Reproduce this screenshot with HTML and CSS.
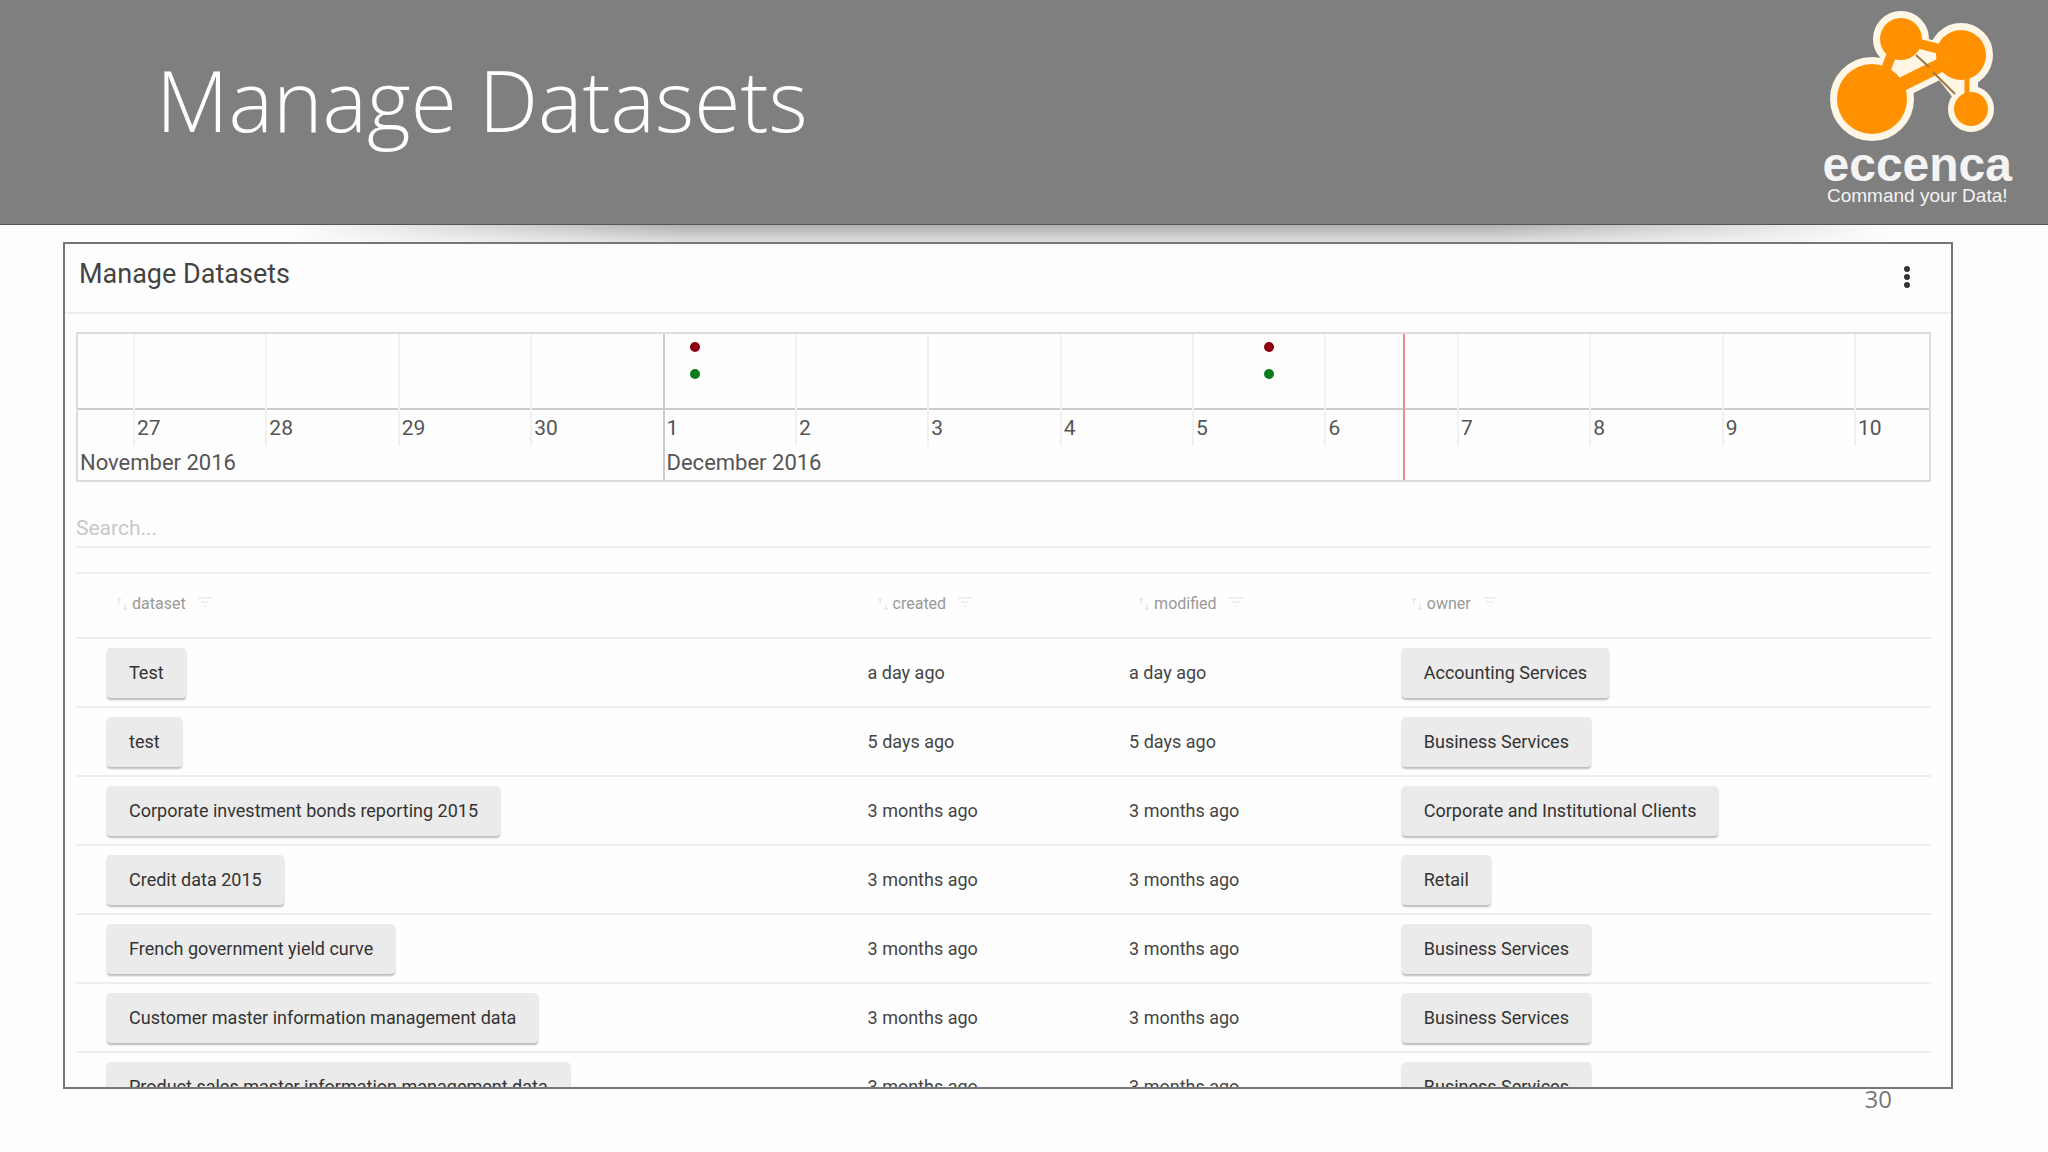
FILE: index.html
```html
<!DOCTYPE html>
<html lang="en">
<head>
  <meta charset="UTF-8" />
  <meta name="viewport" content="width=device-width, initial-scale=1.0" />
  <title>Manage Datasets</title>
  <link rel="stylesheet" href="styles.css">
</head>
<body>
  <header class="slide-header">
    <h1>Manage Datasets</h1>
    <div class="brand">
      <svg class="brand-logo" viewBox="0 0 172 132" aria-hidden="true">
        <g fill="#fff6e6" stroke="#fff6e6" stroke-width="14">
          <circle cx="47" cy="90" r="35" />
          <circle cx="76" cy="30" r="21" />
          <circle cx="136" cy="46" r="25" />
          <circle cx="146" cy="100" r="16" />
          <path d="M47 90L136 46L76 30ZM98 40L146 100V50Z" />
          <path d="M47 90L136 46" stroke-width="26" />
        </g>
        <g fill="#ff9100">
          <circle cx="47" cy="90" r="35" />
          <circle cx="76" cy="30" r="21" />
          <circle cx="136" cy="46" r="25" />
          <circle cx="146" cy="100" r="17" />
        </g>
        <g stroke="#ff9100" fill="none">
          <path d="M47 90L136 46" stroke-width="14" />
          <path d="M76 30L122 42" stroke-width="10" />
          <path d="M54 78L68 42" stroke-width="10" />
          <path d="M142 66V92" stroke-width="5" />
        </g>
        <path d="M91 46L104 58M108 63L130 85" stroke="#9b7a45" stroke-width="2" />
      </svg>
      <div class="brand-name">eccenca</div>
      <div class="brand-claim">Command your Data!</div>
    </div>
  </header>
  <div class="header-shadow"></div>

  <main class="panel">
    <div class="panel-title">
      <h2>Manage Datasets</h2>
      <button class="menu-btn" type="button" aria-label="Menu">
        <svg viewBox="0 0 8 24" width="8" height="24">
          <circle cx="4" cy="4" r="3" /><circle cx="4" cy="12" r="3" /><circle cx="4" cy="20" r="3" />
        </svg>
      </button>
    </div>

    <div class="panel-body">
      <div class="timeline">
        <div class="days">
          <div></div>
          <div><span>27</span></div>
          <div><span>28</span></div>
          <div><span>29</span></div>
          <div><span>30</span></div>
          <div class="first"><span>1</span></div>
          <div><span>2</span></div>
          <div><span>3</span></div>
          <div><span>4</span></div>
          <div><span>5</span></div>
          <div><span>6</span></div>
          <div><span>7</span></div>
          <div><span>8</span></div>
          <div><span>9</span></div>
          <div><span>10</span></div>
        </div>
        <div class="months">
          <div>November 2016</div>
          <div class="first">December 2016</div>
        </div>
        <i class="dot modified" style="left: 33.3%"></i>
        <i class="dot created" style="left: 33.3%"></i>
        <i class="dot modified" style="left: 64.3%"></i>
        <i class="dot created" style="left: 64.3%"></i>
        <i class="now" style="left: 71.6%"></i>
      </div>

      <input class="search" type="text" placeholder="Search..." aria-label="Search" />

      <table class="datasets">
        <thead>
          <tr>
            <th class="col-dataset"><button type="button"><svg class="sort" viewBox="0 0 10 16"><path d="M2 8V2M0 4L2 2L4 4M8 8V14M6 12L8 14L10 12" /></svg>dataset<svg class="filter" viewBox="0 0 14 12"><path d="M0 2H14M3 6H11M6 10H8" /></svg></button></th>
            <th class="col-created"><button type="button"><svg class="sort" viewBox="0 0 10 16"><path d="M2 8V2M0 4L2 2L4 4M8 8V14M6 12L8 14L10 12" /></svg>created<svg class="filter" viewBox="0 0 14 12"><path d="M0 2H14M3 6H11M6 10H8" /></svg></button></th>
            <th class="col-modified"><button type="button"><svg class="sort" viewBox="0 0 10 16"><path d="M2 8V2M0 4L2 2L4 4M8 8V14M6 12L8 14L10 12" /></svg>modified<svg class="filter" viewBox="0 0 14 12"><path d="M0 2H14M3 6H11M6 10H8" /></svg></button></th>
            <th class="col-owner"><button type="button"><svg class="sort" viewBox="0 0 10 16"><path d="M2 8V2M0 4L2 2L4 4M8 8V14M6 12L8 14L10 12" /></svg>owner<svg class="filter" viewBox="0 0 14 12"><path d="M0 2H14M3 6H11M6 10H8" /></svg></button></th>
          </tr>
        </thead>
        <tbody>
          <tr>
            <td><button class="chip" type="button">Test</button></td>
            <td>a day ago</td>
            <td>a day ago</td>
            <td><button class="chip" type="button">Accounting Services</button></td>
          </tr>
          <tr>
            <td><button class="chip" type="button">test</button></td>
            <td>5 days ago</td>
            <td>5 days ago</td>
            <td><button class="chip" type="button">Business Services</button></td>
          </tr>
          <tr>
            <td><button class="chip" type="button">Corporate investment bonds reporting 2015</button></td>
            <td>3 months ago</td>
            <td>3 months ago</td>
            <td><button class="chip" type="button">Corporate and Institutional Clients</button></td>
          </tr>
          <tr>
            <td><button class="chip" type="button">Credit data 2015</button></td>
            <td>3 months ago</td>
            <td>3 months ago</td>
            <td><button class="chip" type="button">Retail</button></td>
          </tr>
          <tr>
            <td><button class="chip" type="button">French government yield curve</button></td>
            <td>3 months ago</td>
            <td>3 months ago</td>
            <td><button class="chip" type="button">Business Services</button></td>
          </tr>
          <tr>
            <td><button class="chip" type="button">Customer master information management data</button></td>
            <td>3 months ago</td>
            <td>3 months ago</td>
            <td><button class="chip" type="button">Business Services</button></td>
          </tr>
          <tr>
            <td><button class="chip" type="button">Product sales master information management data</button></td>
            <td>3 months ago</td>
            <td>3 months ago</td>
            <td><button class="chip" type="button">Business Services</button></td>
          </tr>
        </tbody>
      </table>
    </div>
  </main>

  <footer class="slide-footer">30</footer>
</body>
</html>
```
FILE: styles.css
```css
* {
  box-sizing: border-box;
}

body {
  display: flex;
  flex-direction: column;
  height: 100vh;
  margin: 0;
  overflow: hidden;
  background: #fefefe;
  color: #444;
  font-family: Roboto, sans-serif;
}

button {
  border: 0;
  background: none;
  color: inherit;
  font-family: inherit;
  cursor: pointer;
}

/* slide header */
.slide-header {
  display: flex;
  flex: none;
  justify-content: space-between;
  align-items: flex-start;
  height: 225px;
  padding: 8px 36px 0 156px;
  background: #7f7f7f;
  border-bottom: 1px solid #555;
  color: #fff;
}

.slide-header h1 {
  margin: 37px 0 0;
  font: 300 84px/110px "Open Sans", sans-serif;
}

.brand {
  display: flex;
  flex-direction: column;
  color: #f4f4f4;
  font-family: "Liberation Sans", sans-serif;
}

.brand-logo {
  width: 172px;
  height: 134px;
  margin-left: 2px;
}

.brand-name {
  font-size: 48px;
  font-weight: bold;
  line-height: 46px;
}

.brand-claim {
  font-size: 19px;
  line-height: 16px;
  text-align: center;
}

.header-shadow {
  flex: none;
  height: 17px;
  margin: 0 150px 0 280px;
  background: linear-gradient(#b0b0b0, #dedede);
  mask-image: linear-gradient(90deg, transparent, #000 25%, #000 75%, transparent);
}

/* panel */
.panel {
  flex: 1;
  min-height: 0;
  margin: 0 95px 0 63px;
  border: 2px solid #777;
  background: #fefefe;
  overflow: hidden;
}

.panel-title {
  display: flex;
  justify-content: space-between;
  height: 70px;
  padding: 13px 36px 0 14px;
  border-bottom: 2px solid #eee;
}

.panel-title h2 {
  margin: 0;
  font-size: 27px;
  font-weight: 400;
  line-height: 34px;
}

.menu-btn {
  height: 40px;
  padding: 4px;
  line-height: 0;
  fill: #333;
}

.panel-body {
  padding: 18px 20px 0 11px;
}

/* timeline */
.timeline {
  position: relative;
  height: 150px;
  border: 2px solid #ddd;
  font-size: 21px;
  line-height: 28px;
  color: #555;
}

.days {
  display: grid;
  grid-template-columns: 110fr repeat(13, 265fr) 150fr;
}

.days div {
  display: flex;
  align-items: flex-end;
  height: 112px;
  padding: 0 0 4px 2px;
  border-left: 2px solid #f1f1f1;
  background: linear-gradient(#ccc, #ccc) 0 74px / 100% 2px no-repeat border-box;
}

.days div:first-child {
  border-left: 0;
}

.days .first,
.months .first {
  border-left: 2px solid #ccc;
}

.months {
  display: grid;
  grid-template-columns: 1170fr 2535fr;
  font-size: 22px;
  line-height: 34px;
}

.months div {
  height: 34px;
  padding-left: 2px;
}

.dot {
  position: absolute;
  width: 10px;
  height: 10px;
  margin-left: -4px;
  border-radius: 50%;
}

.modified {
  top: 8px;
  background: #8b0010;
}

.created {
  top: 35px;
  background: #0a7a1c;
}

.now {
  position: absolute;
  top: 0;
  bottom: 0;
  width: 2px;
  background: #f28b8b;
}

/* search */
.search {
  display: block;
  width: 100%;
  height: 38px;
  margin: 28px 0 24px;
  padding: 0;
  border: 0;
  border-bottom: 2px solid #eee;
  outline: none;
  background: none;
  font: 21px Roboto, sans-serif;
}

.search::placeholder {
  color: #c8c8c8;
}

/* table */
.datasets {
  width: 100%;
  table-layout: fixed;
  border-collapse: collapse;
  border-top: 2px solid #f0f0f0;
  font-size: 18px;
}

.datasets th,
.datasets td {
  padding: 0 0 0 31px;
  border-bottom: 2px solid #eee;
  text-align: left;
}

.datasets th {
  height: 65px;
}

.datasets td {
  height: 69px;
}

.col-dataset {
  width: 41%;
}

.col-created {
  width: 14.1%;
}

.col-modified {
  width: 14.7%;
}

.datasets th button {
  display: flex;
  align-items: center;
  padding: 0 0 4px 10px;
  color: #999;
  font-size: 16px;
}

.sort,
.filter {
  fill: none;
  stroke: #e2e2e2;
}

.sort {
  width: 10px;
  height: 16px;
  margin-right: 5px;
}

.filter {
  width: 14px;
  height: 12px;
  margin: 0 0 4px 12px;
}

.chip {
  height: 50px;
  padding: 0 22px;
  border-radius: 4px;
  background: #ebebeb;
  box-shadow: 0 2px 2px #bbb;
  color: #333;
  font-size: 18px;
}

/* slide number */
.slide-footer {
  flex: none;
  height: 63px;
  padding-right: 156px;
  color: #777;
  font: 24px/20px "Open Sans", sans-serif;
  text-align: right;
}
```
